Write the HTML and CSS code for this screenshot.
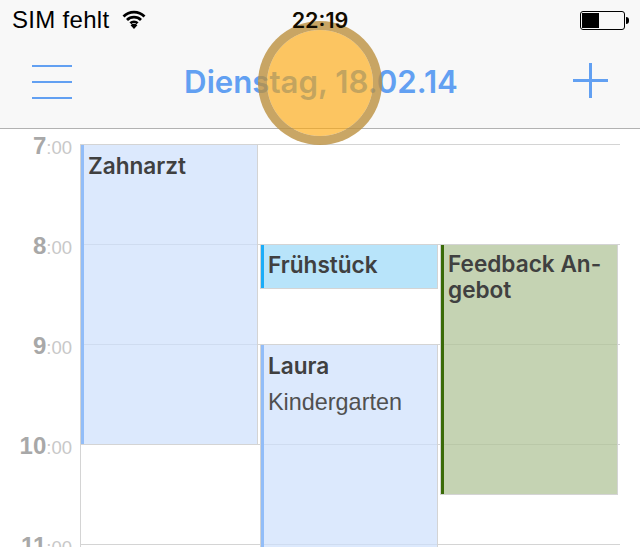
FILE: index.html

```html
<!DOCTYPE html>
<html lang="de">
<head>
  <meta charset="UTF-8" />
  <title>Kalender</title>
  <link rel="stylesheet" href="styles.css">
</head>
<body>
  <div class="screen">
    <div class="top">
      <div class="status">
        <div class="carrier">
          <span>SIM fehlt</span>
          <svg class="wifi" width="24" height="20" viewBox="0 0 24 20">
            <path d="M1.5 7.5a15 15 0 0 1 21 0" />
            <path d="M5 11a10 10 0 0 1 14 0" />
            <path d="M8.4 14.3a5.2 5.2 0 0 1 7.2 0" />
            <path class="wifi-dot" d="M12 20l-3.4-3.8a4.8 4.8 0 0 1 6.8 0z" />
          </svg>
        </div>
        <div class="clock">22:19</div>
        <div class="battery">
          <div class="battery-box"><div class="battery-level"></div></div>
          <div class="battery-tip"></div>
        </div>
      </div>
      <div class="nav">
        <div class="menu-icon"><i></i><i></i><i></i></div>
        <div class="nav-title">Dienstag, 18.02.14</div>
        <svg class="plus-icon" width="36" height="36" viewBox="0 0 36 36">
          <path d="M0 17.5h35M17.5 0v35" />
        </svg>
      </div>
    </div>

    <div class="day">
      <div class="hour"><div class="hour-label"><b>7</b>:00</div><div class="hour-line"></div></div>
      <div class="hour"><div class="hour-label"><b>8</b>:00</div><div class="hour-line"></div></div>
      <div class="hour"><div class="hour-label"><b>9</b>:00</div><div class="hour-line"></div></div>
      <div class="hour"><div class="hour-label"><b>10</b>:00</div><div class="hour-line"></div></div>
      <div class="hour"><div class="hour-label"><b>11</b>:00</div><div class="hour-line"></div></div>

      <div class="event event-blue ev-zahnarzt"><div class="event-title">Zahnarzt</div></div>
      <div class="event event-cyan ev-fruehstueck"><div class="event-title">Frühstück</div></div>
      <div class="event event-blue ev-laura">
        <div class="event-title">Laura</div>
        <div class="event-place">Kindergarten</div>
      </div>
      <div class="event event-green ev-feedback"><div class="event-title">Feedback An-<br>gebot</div></div>
    </div>

    <div class="touch"></div>
  </div>
</body>
</html>
```

FILE: styles.css

```css
html, body {
  margin: 0;
  padding: 0;
}
body {
  font-family: "Liberation Sans", Arial, sans-serif;
  background: white;
}
.screen {
  position: relative;
  width: 640px;
  height: 547px;
  overflow: hidden;
}

.top {
  height: 128px;
  background-color: #f8f8f8;
  border-bottom: 1px solid #b2b2b2;
}
.status {
  display: grid;
  grid-template-columns: 1fr auto 1fr;
  align-items: center;
  height: 40px;
  padding: 0 12px;
  color: #000;
}
.carrier {
  display: flex;
  align-items: center;
  gap: 13px;
  font-size: 24px;
  letter-spacing: 0.3px;
}
.wifi {
  margin-top: -2px;
}
.wifi path {
  fill: none;
  stroke: #000;
  stroke-width: 2.8;
}
.wifi .wifi-dot {
  fill: #000;
  stroke: none;
}
.clock {
  position: relative;
  z-index: 1;
  font-family: Inter, "Liberation Sans", sans-serif;
  font-size: 21.6px;
  font-weight: 600;
  color: #120c00;
}
.battery {
  display: flex;
  align-items: center;
  justify-content: flex-end;
  gap: 1px;
  margin: 1px -1px 0 0;
}
.battery-box {
  width: 41px;
  height: 15px;
  padding: 1px;
  border: 1px solid #000;
  border-radius: 3px;
}
.battery-level {
  width: 17px;
  height: 100%;
  background: #000;
}
.battery-tip {
  width: 3px;
  height: 7px;
  background: #000;
  border-radius: 0 3px 3px 0;
}

.nav {
  display: flex;
  align-items: center;
  justify-content: space-between;
  height: 84px;
  padding: 0 31px 0 32px;
}
.menu-icon {
  width: 40px;
  margin-top: -1px;
}
.menu-icon i {
  display: block;
  height: 2px;
  background: #62a0f2;
  margin-bottom: 14px;
}
.menu-icon i:last-child {
  margin-bottom: 0;
}
.nav-title {
  font-family: Inter, "Liberation Sans", sans-serif;
  font-size: 31.2px;
  font-weight: 600;
  color: #62a0f2;
  margin: -1px 3px 0 0;
}
.plus-icon {
  margin-top: -3px;
}
.plus-icon path {
  fill: none;
  stroke: #62a0f2;
  stroke-width: 3;
}

.day {
  position: relative;
  padding-top: 15px;
}
.hour {
  display: flex;
  height: 100px;
}
.hour-label {
  box-sizing: border-box;
  width: 80px;
  padding-right: 8px;
  margin-top: -12px;
  text-align: right;
  font-size: 18.5px;
  color: #c8c8c8;
}
.hour-label b {
  font-size: 24px;
  color: #a8a8a8;
}
.hour-line {
  box-sizing: border-box;
  width: 540px;
  border-top: 1px solid #d4d4d4;
  border-left: 1px solid #d4d4d4;
}

.event {
  position: absolute;
  box-sizing: border-box;
  width: 176px;
  padding: 8px 0 0 4px;
  border-left: 3px solid;
  outline: 1px solid #d4d4d4;
  font-size: 24px;
  color: #404040;
}
.event-blue {
  background: rgba(205, 223, 252, 0.7);
  border-left-color: #92bdf8;
}
.event-cyan {
  background: rgba(160, 219, 248, 0.75);
  border-left-color: #1badf8;
  padding-top: 7px;
}
.event-green {
  background: rgba(178, 196, 153, 0.75);
  border-left-color: #3a6b08;
  padding-top: 6px;
}
.event-title {
  font-family: Inter, "Liberation Sans", sans-serif;
  font-size: 22.6px;
  font-weight: 600;
  line-height: 26px;
}
.event-place {
  margin-top: 9px;
  font-size: 23.4px;
  line-height: 28px;
  color: #505050;
}
.ev-zahnarzt {
  left: 81px;
  top: 16px;
  height: 299px;
}
.ev-fruehstueck {
  left: 261px;
  top: 116px;
  height: 43px;
}
.ev-laura {
  left: 261px;
  top: 216px;
  height: 300px;
}
.ev-feedback {
  left: 441px;
  top: 116px;
  height: 249px;
}

.touch {
  position: absolute;
  left: 258px;
  top: 21px;
  box-sizing: border-box;
  width: 124px;
  height: 124px;
  border: 9px solid rgba(188, 144, 62, 0.8);
  border-radius: 50%;
  background: rgba(255, 167, 5, 0.62);
  background-clip: padding-box;
}
```
